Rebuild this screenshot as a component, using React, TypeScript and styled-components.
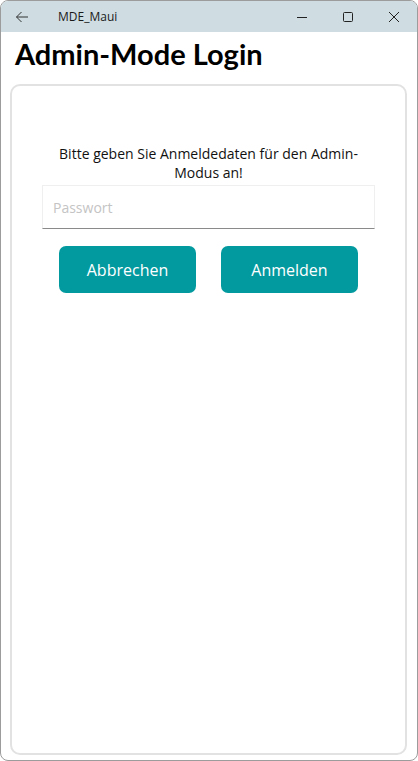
import React from 'react';
import styled, { createGlobalStyle } from 'styled-components';

const GlobalStyle = createGlobalStyle`
  html, body {
    margin: 0;
    padding: 0;
    background: #ffffff;
  }
  * {
    box-sizing: border-box;
  }
`;

const Window = styled.div`
  width: 418px;
  height: 761px;
  display: flex;
  flex-direction: column;
  border: 1px solid #9c9c9c;
  border-radius: 8px;
  overflow: hidden;
  background: #ffffff;
  font-family: 'Open Sans', 'Noto Sans', sans-serif;
`;

const TitleBar = styled.div`
  height: 31px;
  flex-shrink: 0;
  display: flex;
  align-items: center;
  background: #cfdde2;
  color: #1a1a1a;
`;

const BackButton = styled.div`
  width: 40px;
  display: flex;
  justify-content: center;
  padding-left: 1px;
`;

const AppName = styled.span`
  margin-left: 17px;
  font-size: 12px;
  flex: 1;
`;

const CaptionButton = styled.div`
  width: 46px;
  height: 31px;
  display: flex;
  align-items: center;
  justify-content: center;
`;

const PageTitle = styled.h1`
  margin: 0;
  padding: 3px 0 0 14px;
  height: 52px;
  font-family: 'Lato', 'Open Sans', sans-serif;
  font-weight: 700;
  font-size: 29px;
  line-height: 38px;
  color: #000000;
  flex-shrink: 0;
`;

const Card = styled.div`
  flex: 1;
  margin: 0 10px 5px 9px;
  border: 2px solid #e2e2e2;
  border-radius: 10px;
  padding: 58px 29px 0 29px;
  display: flex;
  flex-direction: column;
  align-items: center;
`;

const Prompt = styled.p`
  margin: 0 0 3px;
  width: 333px;
  text-align: center;
  font-size: 14px;
  line-height: 19px;
  color: #111111;
`;

const PasswordInput = styled.input`
  width: 333px;
  height: 44px;
  border: 1px solid #efefef;
  border-bottom: 1px solid #8a8a8a;
  padding: 0 10px;
  font-family: 'Open Sans', 'Noto Sans', sans-serif;
  font-size: 14px;
  color: #222;
  outline: none;
  background: #ffffff;

  &::placeholder {
    color: #c4c4c4;
  }
`;

const ButtonRow = styled.div`
  display: flex;
  gap: 25px;
  margin-top: 17px;
`;

const ActionButton = styled.button`
  width: 137px;
  height: 47px;
  border: none;
  border-radius: 7px;
  background: #039a9f;
  color: #ffffff;
  font-family: 'Open Sans', 'Noto Sans', sans-serif;
  font-size: 16px;
  cursor: pointer;
`;

function App() {
  return (
    <>
      <GlobalStyle />
      <Window>
        <TitleBar>
          <BackButton>
            <svg width="14" height="12" viewBox="0 0 14 12" fill="none" stroke="#333" strokeWidth="1">
              <path d="M13 6H1.5M6.5 1L1.5 6l5 5" />
            </svg>
          </BackButton>
          <AppName>MDE_Maui</AppName>
          <CaptionButton>
            <svg width="10" height="10" viewBox="0 0 10 10" stroke="#222" strokeWidth="1">
              <path d="M0 5.5h10" />
            </svg>
          </CaptionButton>
          <CaptionButton>
            <svg width="10" height="10" viewBox="0 0 10 10" fill="none" stroke="#222" strokeWidth="1">
              <rect x="0.5" y="0.5" width="9" height="9" rx="1" />
            </svg>
          </CaptionButton>
          <CaptionButton>
            <svg width="10" height="10" viewBox="0 0 10 10" stroke="#222" strokeWidth="1">
              <path d="M0 0l10 10M10 0L0 10" />
            </svg>
          </CaptionButton>
        </TitleBar>
        <PageTitle>Admin-Mode Login</PageTitle>
        <Card>
          <Prompt>Bitte geben Sie Anmeldedaten für den Admin-Modus an!</Prompt>
          <PasswordInput type="password" placeholder="Passwort" />
          <ButtonRow>
            <ActionButton>Abbrechen</ActionButton>
            <ActionButton>Anmelden</ActionButton>
          </ButtonRow>
        </Card>
      </Window>
    </>
  );
}

export default App;
